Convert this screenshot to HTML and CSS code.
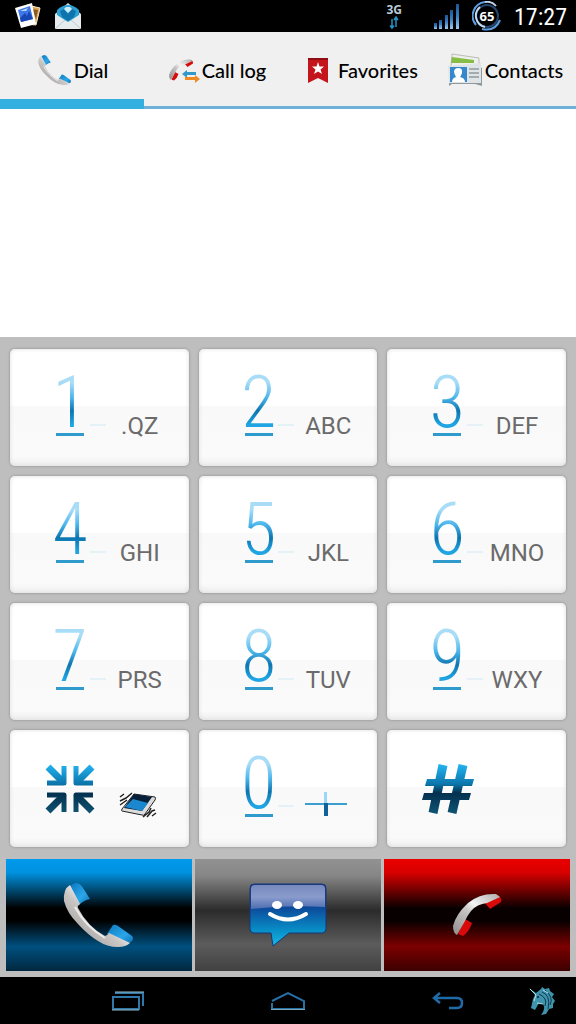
FILE: index.html
```
<!DOCTYPE html>
<html lang="en">
<head>
  <meta charset="UTF-8">
  <meta name="viewport" content="width=device-width, initial-scale=1">
  <title>Dialer</title>
  <link rel="stylesheet" href="styles.css">
</head>
<body>

  <!-- shared gradients and icons -->
  <svg class="defs" aria-hidden="true">
    <defs>
      <linearGradient id="silver" x1="0" y1="1" x2="1" y2="0">
        <stop offset="0" stop-color="#8d8d8d"></stop>
        <stop offset=".45" stop-color="#c9c6c4"></stop>
        <stop offset=".6" stop-color="#f4f4f4"></stop>
        <stop offset="1" stop-color="#aaa"></stop>
      </linearGradient>
      <linearGradient id="pad" x1="0" y1="0" x2="1" y2="1">
        <stop offset="0" stop-color="#0b78bd"></stop>
        <stop offset=".6" stop-color="#2ba6ea"></stop>
        <stop offset="1" stop-color="#0c6fb0"></stop>
      </linearGradient>
      <linearGradient id="deep" x1="0" y1="0" x2="0" y2="50" gradientUnits="userSpaceOnUse">
        <stop offset="0" stop-color="#22b5f2"></stop>
        <stop offset=".4" stop-color="#0b76ab"></stop>
        <stop offset=".58" stop-color="#04304f"></stop>
        <stop offset="1" stop-color="#0e5573"></stop>
      </linearGradient>
      <linearGradient id="bars" x1="0" y1="0" x2="0" y2="1">
        <stop offset="0" stop-color="#1b5598"></stop>
        <stop offset=".5" stop-color="#3a80c4"></stop>
        <stop offset="1" stop-color="#9ccbf2"></stop>
      </linearGradient>
      <linearGradient id="bubble" x1="0" y1="0" x2="0" y2="1">
        <stop offset="0" stop-color="#1c3c86"></stop>
        <stop offset=".4" stop-color="#0d4d9c"></stop>
        <stop offset=".75" stop-color="#088fc8"></stop>
        <stop offset="1" stop-color="#18b8e6"></stop>
      </linearGradient>
      <linearGradient id="gloss" x1="0" y1="0" x2="0" y2="1">
        <stop offset="0" stop-color="#8290c4"></stop>
        <stop offset=".5" stop-color="#96a5d2"></stop>
        <stop offset="1" stop-color="#5570b4"></stop>
      </linearGradient>
    </defs>
    <symbol id="handset" viewBox="0 0 72 66">
      <path fill="url(#pad)" d="M7 5 Q9 1 14 1 Q18 2 20 6 L27 17 Q21 18 16 23z"></path>
      <path fill="url(#pad)" d="M50 43 Q52 42 55 44 L69 54 Q71 56 69 59 L65 62 L44 52z"></path>
      <path fill="url(#silver)" d="M7 3 Q0 7 1 19 Q4 31 15 42 Q25 53 35 59 Q44 65 55 65 Q63 65 67 61 L46 51 Q44 54 42 54 Q25 45 15 26 Q14 24 17 22z"></path>
      <path fill="none" stroke="#fff" stroke-width="2" opacity=".7" d="M12 25 Q22 44 42 56"></path>
    </symbol>
    <symbol id="hangup" viewBox="0 0 52 48">
      <path fill="#d80a0a" d="M34 12 L47 4 Q51 7 50 11 L39 18z"></path>
      <path fill="#d80a0a" d="M14 28 L21 32 Q18 41 12 45 L7 43z"></path>
      <path fill="url(#silver)" d="M6 44 Q2 42 2 35 Q5 23 17 12 Q29 2 45 3 L49 6 L36 12 Q26 13 20 20 Q16 25 14 30z"></path>
    </symbol>
  </svg>

  <header class="status-bar">
    <div class="notifications">
      <svg width="28" height="28" viewBox="0 0 28 28" role="img" aria-label="Gallery">
        <path fill="#e0a54c" stroke="#f4e8cd" d="M13 3 L26 6 L22 23 L12 22z"></path>
        <path fill="#8a5a24" d="M18 7 L24 8 L22 17z"></path>
        <path fill="#fff" d="M1 6 L18 1 L22 22 L7 26z"></path>
        <path fill="#3d78e6" d="M4 8 L16 4 L19 17 L7 20z"></path>
        <path fill="#bcd7fb" d="M6 9 L14 6 L12 9z"></path>
        <path fill="#1747b5" d="M6 16 L11 11 L13 14 L15 9 L19 17 L7 20z"></path>
      </svg>
      <svg width="28" height="28" viewBox="0 0 28 28" role="img" aria-label="Mail">
        <path fill="#d3dee3" d="M1 12 L14 1 L27 12 V26 H1z"></path>
        <path fill="#2b9fd2" d="M3 8 Q14 -2 25 8 L25 13 L14 21 L3 13z"></path>
        <path fill="#0e74ab" d="M6 9 L10 7 L14 12 L18 7 L22 9 L20 15 L14 19 L8 15z"></path>
        <path fill="#cceefc" d="M10 7 L14 11 L18 7 L16 5 H12z"></path>
        <path fill="#e6ebee" d="M1 12 L14 20 L27 12 V26 Q27 27 26 27 H2 Q1 27 1 26z"></path>
        <path fill="none" stroke="#c1c9cc" d="M2 26 L11 18 M26 26 L17 18"></path>
      </svg>
    </div>
    <div class="indicators">
      <div class="network">
        <span>3G</span>
        <svg width="12" height="14" viewBox="0 0 12 14">
          <path fill="none" stroke="#2591c4" stroke-width="1.5" d="M4 3 V12 M2 9.500 L4 12 L6 9.500 M8 11 V1 M6 4 L8 1 L10 4"></path>
        </svg>
      </div>
      <svg width="26" height="28" viewBox="0 0 26 28" role="img" aria-label="Signal">
        <g fill="url(#bars)">
          <rect x="0" y="21" width="3" height="6"></rect>
          <rect x="5" y="18" width="3" height="9"></rect>
          <rect x="11" y="13" width="3" height="14"></rect>
          <rect x="16" y="8" width="3" height="19"></rect>
          <rect x="22" y="2" width="3" height="25"></rect>
        </g>
      </svg>
      <div class="battery">
        <svg width="30" height="30" viewBox="0 0 30 30">
          <circle cx="15" cy="15" r="11" fill="none" stroke="#24456d" stroke-width="2"></circle>
          <path fill="none" stroke="#5f9ee0" stroke-width="2" d="M13 1 A14 14 0 0 0 4 24"></path>
          <path fill="none" stroke="#c3d9ef" stroke-width="2" d="M8 6 A11.500 11.500 0 0 0 13 26 M13 1 Q20 0 24 5"></path>
          <path fill="none" stroke="#5c9bdc" stroke-width="2" d="M10 28 Q23 31 28 19"></path>
        </svg>
        <span>65</span>
      </div>
      <time class="clock">17:27</time>
    </div>
  </header>

  <nav class="tabs">
    <button class="tab active">
      <svg width="34" height="34" viewBox="0 0 34 34"><use href="#handset" width="34" height="34"></use></svg>
      Dial
    </button>
    <button class="tab">
      <svg width="32" height="34" viewBox="0 0 32 34">
        <use href="#hangup" x="0" y="4" width="26" height="26"></use>
        <path fill="#3299c8" d="M14 21 L19 17 V19 H28 V22 H19 V25z"></path>
        <path fill="#ef8b22" d="M32 26 L27 22 V24 H17 V27 H27 V30z"></path>
      </svg>
      Call log
    </button>
    <button class="tab">
      <svg width="32" height="34" viewBox="0 0 32 34">
        <path fill="#c4151c" d="M4 5 H24 V30 L14 25 L4 30z"></path>
        <path fill="#8f0d12" d="M4 5 H24 V7 H4z"></path>
        <path fill="#fff" d="M14 9 L15.500 13.500 H20 L16.500 16.500 L18 21 L14 18.500 L10 21 L11.500 16.500 L8 13.500 H12.500z"></path>
      </svg>
      Favorites
    </button>
    <button class="tab">
      <svg width="36" height="36" viewBox="0 0 36 36">
        <path fill="#eef0ec" stroke="#b9bdb8" d="M5 2 L32 6 V26 H3z"></path>
        <path fill="#87bd47" d="M5 5 L27 8 L27 11 L4 11z"></path>
        <path fill="#8f989c" d="M0 14 H2 V34 L5 32 H28 L35 34 V16 L31 14z"></path>
        <path fill="#dfe4e6" d="M1 14 L34 11 L34 31 L2 31z"></path>
        <path fill="#3587ce" d="M3 15 H20 V30 H3z"></path>
        <path fill="#fff" d="M11 16 Q16 16 15 21 Q14 24 13 25 Q18 26 18 30 H5 Q5 26 9 25 Q7 22 7 19 Q8 16 11 16z"></path>
        <path stroke="#909ba0" stroke-width="1.500" d="M22 17 H32 M22 21 H32 M22 25 H32"></path>
      </svg>
      Contacts
    </button>
  </nav>

  <main class="dialer">
    <output class="number" aria-label="Number"></output>

    <section class="pad">
      <div class="keys">
        <button class="key"><span class="digit">1</span><i></i><span class="letters">.QZ</span></button>
        <button class="key"><span class="digit">2</span><i></i><span class="letters">ABC</span></button>
        <button class="key"><span class="digit">3</span><i></i><span class="letters">DEF</span></button>
        <button class="key"><span class="digit">4</span><i></i><span class="letters">GHI</span></button>
        <button class="key"><span class="digit">5</span><i></i><span class="letters">JKL</span></button>
        <button class="key"><span class="digit">6</span><i></i><span class="letters">MNO</span></button>
        <button class="key"><span class="digit">7</span><i></i><span class="letters">PRS</span></button>
        <button class="key"><span class="digit">8</span><i></i><span class="letters">TUV</span></button>
        <button class="key"><span class="digit">9</span><i></i><span class="letters">WXY</span></button>
        <button class="key symbol" aria-label="Star, vibrate">
          <svg class="main-icon" width="50" height="50" viewBox="0 0 50 50">
            <g fill="none" stroke="url(#deep)" stroke-linejoin="round">
              <path stroke-width="7" d="M3 3 L17 17 M47 3 L33 17 M3 47 L17 33 M47 47 L33 33"></path>
              <path stroke-width="5" d="M2 19 H19 V2 M48 19 H31 V2 M2 31 H19 V48 M48 31 H31 V48"></path>
            </g>
          </svg>
          <svg width="38" height="28" viewBox="0 0 38 28">
            <path fill="#ddd" stroke="#222" d="M15 3 L36 6 Q37 7 36 9 L26 23 Q25 25 23 24 L3 20 Q2 20 3 18z"></path>
            <path fill="#071f38" d="M15 3 L33 6 L23 20 L5 17z"></path>
            <path fill="#1b87cf" d="M6 16 L14 8 L29 12 L23 20z"></path>
            <path fill="none" stroke="#222" stroke-width="1.500" d="M1 6 L5 3 M1 10 L7 7 L13 2 M1 14 L8 9 M24 26 L30 21 L32 17 M28 26 L33 20 L36 19 M33 25 L37 22"></path>
          </svg>
        </button>
        <button class="key"><span class="digit">0</span><i></i>
          <svg class="plus" width="66" height="26" viewBox="0 0 66 26" role="img" aria-label="plus">
            <path fill="#3c9fd0" d="M10 12 H52 V14 H10z"></path>
            <path fill="#9bd7f5" d="M29 1 H32 V12 H29z"></path>
            <path fill="#11629b" d="M29 12 H33 V25 H29z"></path>
          </svg>
        </button>
        <button class="key symbol" aria-label="Hash">
          <svg class="main-icon" width="52" height="50" viewBox="0 0 52 50">
            <path fill="none" stroke="url(#deep)" stroke-width="9" d="M21 1 L11 49 M41 1 L30 49"></path>
            <path fill="url(#deep)" d="M5 15 H52 L50 22 H3z M2 29 H49 L47 36 H0z"></path>
          </svg>
        </button>
      </div>

      <div class="actions">
        <button class="action call" aria-label="Call">
          <svg width="72" height="66"><use href="#handset"></use></svg>
        </button>
        <button class="action message" aria-label="Message">
          <svg width="78" height="66" viewBox="0 0 78 66">
            <path fill="url(#bubble)" stroke="#173775" d="M5 2 H73 Q77 2 77 6 V47 Q77 51 73 51 H40 L24 64 L22 51 H5 Q1 51 1 47 V6 Q1 2 5 2z"></path>
            <path fill="url(#gloss)" opacity=".9" d="M6 3 H72 Q76 3 76 7 V25 Q40 23 2 27 V7 Q2 3 6 3z"></path>
            <ellipse cx="28" cy="23" rx="5" ry="4" fill="#fff"></ellipse>
            <ellipse cx="49" cy="23" rx="5" ry="4" fill="#fff"></ellipse>
            <path fill="none" stroke="#fff" stroke-width="4" stroke-linecap="round" d="M21 32 Q39 43 57 32"></path>
          </svg>
        </button>
        <button class="action end" aria-label="End call">
          <svg width="52" height="48"><use href="#hangup"></use></svg>
        </button>
      </div>
    </section>
  </main>

  <footer class="nav-bar">
    <button class="recent" aria-label="Recent apps">
      <svg width="34" height="20" viewBox="0 0 34 20">
        <path fill="none" stroke="#2f78a8" stroke-width="2" d="M2 6 H28 V18 H2z M4 2 H32 V15"></path>
        <path stroke="#93b9c4" d="M4 1 H33 M1 19 H28"></path>
      </svg>
    </button>
    <button class="home" aria-label="Home">
      <svg width="36" height="20" viewBox="0 0 36 20">
        <path fill="none" stroke="#276fa5" stroke-width="2" d="M2 10 L18 2 L34 10 V18 H2 V12"></path>
        <path stroke="#7ca7b8" d="M1 18.500 H35"></path>
      </svg>
    </button>
    <button class="back" aria-label="Back">
      <svg width="32" height="20" viewBox="0 0 32 20">
        <path fill="none" stroke="#1f6ba8" stroke-width="2.500" d="M3 7 H25 Q30 7 30 12 Q30 17 25 17 H17 M8 2 L2 7 L8 12"></path>
      </svg>
    </button>
    <button class="menu" aria-label="Menu">
      <svg width="28" height="30" viewBox="0 0 28 30">
        <path fill="#3f93ad" d="M1 2 L8 7 L13 3 L14 1 L17 3 L21 2 L22 5 L26 8 L24 11 L27 15 L25 18 L25 22 L21 23 L18 28 L13 29 Q18 23 15 18 L11 17 L7 24 L3 22 L5 13 L7 9z"></path>
        <path fill="none" stroke="#0d394c" d="M14 6 Q23 9 20 23 M17 4 Q26 11 22 19 M11 8 Q20 12 17 20"></path>
        <path fill="none" stroke="#b3dfe7" d="M2 3 L8 9 L6 15 M15 4 L20 7 M9 17 L15 18"></path>
        <circle cx="10" cy="11" r="1" fill="#07202c"></circle>
      </svg>
    </button>
  </footer>

</body>
</html>
```

FILE: styles.css
```
* {
  box-sizing: border-box;
}

body {
  margin: 0;
  min-height: 100vh;
  display: flex;
  flex-direction: column;
  background: #fff;
  font-family: Roboto, sans-serif;
}

button {
  border: none;
  padding: 0;
  background: none;
  font-family: inherit;
  cursor: pointer;
}

svg {
  display: block;
  flex: none;
}

.defs {
  position: absolute;
  width: 0;
  height: 0;
}

/* status bar */
.status-bar {
  height: 32px;
  padding: 0 9px 0 14px;
  display: flex;
  justify-content: space-between;
  align-items: center;
  background: #000;
  color: #fff;
}

.notifications,
.indicators {
  display: flex;
  align-items: center;
}

.notifications {
  gap: 12px;
}

.indicators {
  gap: 12px;
}

.network {
  margin-right: 20px;
  display: flex;
  flex-direction: column;
  align-items: center;
  color: #b9cbd6;
  font: bold 12px/13px "Open Sans", sans-serif;
}

.battery {
  display: grid;
  place-items: center;
  font: bold 13px/16px "Open Sans", sans-serif;
}

.battery > * {
  grid-area: 1 / 1;
}

.clock {
  padding-top: 2px;
  font: 24px/30px "Roboto Condensed", "Liberation Sans Narrow", "Open Sans", sans-serif;
}

/* tabs */
.tabs {
  height: 77px;
  display: grid;
  grid-template-columns: repeat(4, 1fr);
  background: #f0f0f0;
  box-shadow: inset 0 -3px #6fb0d8;
}

.tab {
  padding: 8px 0 0 2px;
  display: flex;
  justify-content: center;
  align-items: center;
  gap: 2px;
  border-bottom: 10px solid transparent;
  color: #000;
  font: 500 20px/24px Lato, sans-serif;
  white-space: nowrap;
}

.tab.active {
  border-bottom-color: #34b0e0;
}

/* dialer */
.dialer {
  flex: 1;
  display: flex;
  flex-direction: column;
}

.number {
  flex: 1;
}

.pad {
  padding: 12px 6px 6px;
  background: #bebebe;
}

.keys {
  padding: 0 4px;
  display: grid;
  grid-template-columns: repeat(3, minmax(0, 1fr));
  gap: 10px;
}

.key {
  height: 117px;
  padding: 0 16px 30px 41px;
  display: grid;
  grid-template-columns: 38px 16px 66px;
  justify-content: space-between;
  align-items: end;
  border-radius: 5px;
  background: linear-gradient(#fff 0, #fff 49%, #f9f9f9 49%, #fafafa 92%, #eee 100%);
  box-shadow: 0 0 3px #888, inset 0 0 4px #ddd;
}

.digit {
  display: block;
  color: #1595d3;
  background: linear-gradient(#a8dcf7 15%, #4fb8ee 38%, #0c75b0 60%, #1fa5e3 82%);
  background-clip: text;
  -webkit-background-clip: text;
  -webkit-text-fill-color: transparent;
  font: 300 72px/60px "Roboto Condensed", "Liberation Sans Narrow", Roboto, sans-serif;
  text-align: center;
}

.digit::after {
  content: "";
  display: block;
  height: 3px;
  margin: 0 5px;
  background: #2f9bcd;
}

.key i {
  height: 2px;
  margin-bottom: 10px;
  background: #e4f2f8;
}

.letters {
  padding-bottom: 1px;
  color: #6b6b6b;
  font-size: 24px;
  line-height: 18px;
  text-align: center;
}

.key.symbol {
  padding: 0 32px 28px 35px;
  display: flex;
}

.main-icon {
  margin-bottom: 5px;
}

/* call actions */
.actions {
  margin-top: 12px;
  display: grid;
  grid-template-columns: repeat(3, 1fr);
  gap: 3px;
}

.action {
  height: 112px;
  display: flex;
  justify-content: center;
  align-items: center;
}

.call {
  background: linear-gradient(#0099ec, #0092e0 12%, #000 44%, #000 55%, #00507f 78%, #00283f);
}

.message {
  background: linear-gradient(#929292, #868686 15%, #2b2b2b 46%, #5c5c5c 76%, #414141);
}

.end {
  background: linear-gradient(#ea0000, #d80000 12%, #080000 44%, #080000 55%, #7c0000 78%, #3c0000);
}

/* system navigation */
.nav-bar {
  height: 47px;
  display: grid;
  grid-template-columns: 48px 1fr 1fr 1fr 48px;
  place-items: center;
  background: #000;
}

.recent {
  grid-column: 2;
}

.menu {
  justify-self: start;
}
```
